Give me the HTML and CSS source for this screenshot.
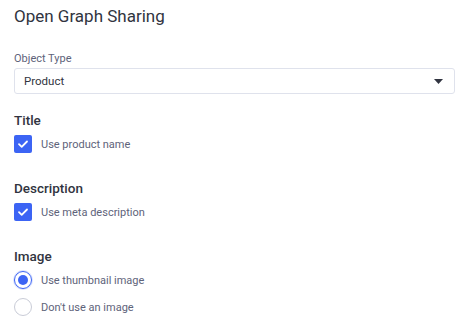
FILE: index.html
```html
<!DOCTYPE html>
<html>
<head>
<meta charset="utf-8">
<link rel="stylesheet" href="styles.css">
</head>
<body>
<div class="page">
  <h1 class="page-title">Open Graph Sharing</h1>
  <div class="field">
    <label class="field-label">Object Type</label>
    <div class="select">
      <span class="select-value">Product</span>
      <svg class="caret" width="9" height="5" viewBox="0 0 9 5"><path d="M0 0 L9 0 L4.5 5 Z" fill="#313440"/></svg>
    </div>
  </div>
  <section class="group">
    <h2 class="group-title">Title</h2>
    <div class="option">
      <span class="checkbox"><svg width="12" height="10" viewBox="0 0 12 10"><path d="M2 5.2 L4.7 7.8 L10 2.5" fill="none" stroke="#fff" stroke-width="1.8" stroke-linecap="round" stroke-linejoin="round"/></svg></span>
      <span class="option-label">Use product name</span>
    </div>
  </section>
  <section class="group">
    <h2 class="group-title">Description</h2>
    <div class="option">
      <span class="checkbox"><svg width="12" height="10" viewBox="0 0 12 10"><path d="M2 5.2 L4.7 7.8 L10 2.5" fill="none" stroke="#fff" stroke-width="1.8" stroke-linecap="round" stroke-linejoin="round"/></svg></span>
      <span class="option-label">Use meta description</span>
    </div>
  </section>
  <section class="group">
    <h2 class="group-title">Image</h2>
    <div class="option">
      <span class="radio checked"></span>
      <span class="option-label">Use thumbnail image</span>
    </div>
    <div class="option">
      <span class="radio"></span>
      <span class="option-label">Don't use an image</span>
    </div>
  </section>
</div>
</body>
</html>
```

FILE: styles.css
```css
html, body {
  margin: 0;
  padding: 0;
  background: #fff;
}
body {
  font-family: Roboto, "Open Sans", "Liberation Sans", sans-serif;
  color: #313440;
}
.page {
  padding: 5px 19px 0 14px;
}
.page-title {
  margin: 0;
  font-size: 17px;
  font-weight: 400;
  line-height: 22px;
  color: #313440;
}
.field {
  margin-top: 25px;
}
.field-label {
  display: block;
  font-size: 11px;
  line-height: 14px;
  color: #5e637a;
  margin-bottom: 2px;
}
.select {
  height: 26px;
  box-sizing: border-box;
  border: 1px solid #dfe2ec;
  border-radius: 3px;
  display: flex;
  align-items: center;
  justify-content: space-between;
  padding: 0 11px 0 9px;
}
.select-value {
  font-size: 11.5px;
  color: #313440;
}
.group {
  margin-top: 17px;
}
.group + .group {
  margin-top: 26px;
}
.group-title {
  margin: 0;
  font-size: 13.5px;
  font-weight: 500;
  line-height: 18px;
  color: #313440;
}
.option {
  display: flex;
  align-items: center;
  gap: 9px;
  margin-top: 6px;
  height: 18px;
}
.option + .option {
  margin-top: 9px;
}
.option-label {
  font-size: 11px;
  color: #5e637a;
}
.checkbox {
  width: 18px;
  height: 18px;
  border-radius: 2px;
  background: #3c64f4;
  display: flex;
  align-items: center;
  justify-content: center;
}
.radio {
  width: 16px;
  height: 16px;
  border-radius: 50%;
  border: 1px solid #c9ccd7;
  box-sizing: content-box;
  position: relative;
}
.radio.checked {
  border-color: #3c64f4;
  box-shadow: 0 0 0 1px #dbe3fe;
}
.radio.checked::after {
  content: "";
  position: absolute;
  left: 3px;
  top: 3px;
  width: 10px;
  height: 10px;
  border-radius: 50%;
  background: #3c64f4;
}
```
